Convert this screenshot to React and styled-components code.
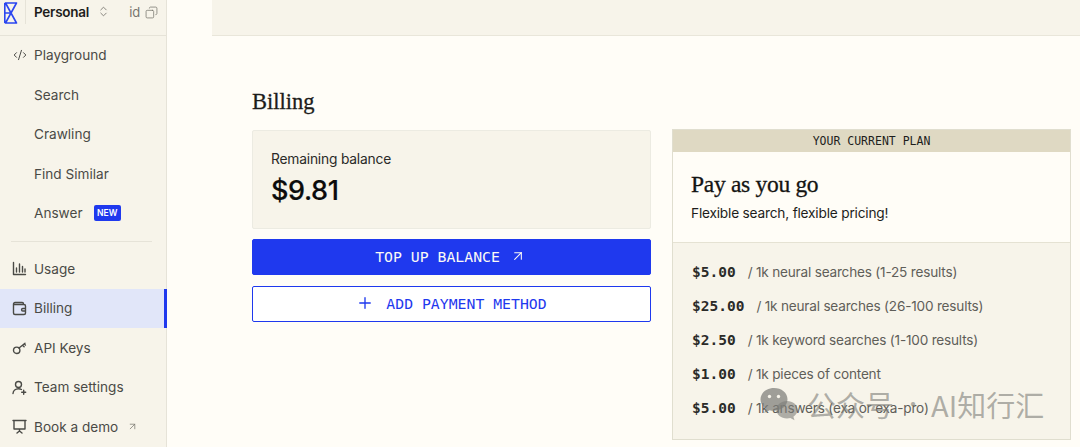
import styled, { createGlobalStyle } from 'styled-components';
import { ChevronsUpDown, Copy, CodeXml, ArrowUpRight, Plus } from 'lucide-react';

const GlobalStyle = createGlobalStyle`
  html, body {
    margin: 0;
    padding: 0;
    height: 447px;
    overflow: hidden;
    background: #fffdf7;
  }
  * { box-sizing: border-box; }
`;

const SANS = `Inter, "Liberation Sans", sans-serif`;
const SERIF = `"Liberation Serif", serif`;
const MONO = `"DejaVu Sans Mono", monospace`;

const Page = styled.div`
  position: relative;
  display: flex;
  width: 1080px;
  height: 447px;
  overflow: hidden;
  background: #fffdf7;
  font-family: ${SANS};
`;

const Sidebar = styled.aside`
  flex: 0 0 167px;
  height: 447px;
  background: #f7f4ea;
  border-right: 1px solid #e6e3d8;
`;

const Brand = styled.div`
  display: flex;
  align-items: center;
  height: 35.5px;
  padding: 0 0 11px 4px;
  border-bottom: 1px solid #e6e3d8;
`;

const Logo = styled.svg`
  width: 14px;
  height: 22px;
  margin-top: 2px;
  flex: none;
`;

const BrandRule = styled.span`
  width: 1px;
  height: 24px;
  margin: 0 8px 0 7px;
  background: #e6e3d8;
`;

const Workspace = styled.span`
  font-size: 13.5px;
  font-weight: 600;
  letter-spacing: -0.25px;
  color: #1d1d1b;
`;

const Chevrons = styled(ChevronsUpDown)`
  margin-left: 8px;
  color: #77756e;
`;

const IdLabel = styled.span`
  margin: 0 5px 0 19px;
  font-size: 13px;
  color: #77756e;
`;

const CopyIcon = styled(Copy)`
  margin-top: 1px;
  color: #77756e;
  transform: scaleX(-1);
`;

const NavRow = styled.div`
  display: flex;
  align-items: center;
  height: 39.5px;
  padding-left: 12px;
  font-size: 13.6px;
  color: #4a4a46;
  background: ${p => (p.$active ? '#e1e6f9' : 'transparent')};
  border-right: ${p => (p.$active ? '3px solid #1f39ee' : '0')};
  margin-right: ${p => (p.$active ? '-1px' : '0')};
`;

const NavIcon = styled.span`
  display: flex;
  align-items: center;
  justify-content: center;
  flex: 0 0 22px;
  width: 22px;
  height: 16px;
  padding-right: 7px;
  color: #4a4a46;
`;

const IconSvg = styled.svg`
  width: 15px;
  height: 15px;
  flex: none;
  fill: none;
  stroke: currentColor;
  stroke-width: 1.4;
  stroke-linecap: round;
  stroke-linejoin: round;
`;

const NewBadge = styled.span`
  margin-left: 11px;
  padding: 0 3.5px;
  height: 16px;
  line-height: 16px;
  border-radius: 2px;
  background: #1f39ee;
  color: #fff;
  font-size: 8.5px;
  font-weight: 600;
  letter-spacing: 0.1px;
`;

const DemoArrow = styled(ArrowUpRight)`
  margin-left: 9px;
  color: #77756e;
`;

const Divider = styled.div`
  height: 1px;
  margin: 7.5px 14px 7.5px 11px;
  background: #e6e3d8;
`;

const Main = styled.main`
  flex: 1;
  min-width: 0;
`;

const TopBand = styled.div`
  height: 36px;
  margin-left: 45px;
  background: #f7f4ea;
  border-bottom: 1px solid #e9e6da;
`;

const Content = styled.div`
  padding: 51px 9px 0 85px;
`;

const Title = styled.h1`
  margin: 0;
  height: 43px;
  line-height: 29px;
  font-family: ${SERIF};
  font-size: 22.5px;
  font-weight: 400;
  color: #1c1c1a;
  -webkit-text-stroke: 0.3px #1c1c1a;
`;

const Columns = styled.div`
  display: grid;
  grid-template-columns: 399px 399px;
  column-gap: 21px;
  align-items: start;
`;

const LeftColumn = styled.div`
  display: flex;
  flex-direction: column;
`;

const BalanceCard = styled.div`
  height: 99px;
  padding: 19px 18px;
  background: #f7f4ea;
  border: 1px solid #ecebe2;
  border-radius: 2px;
`;

const BalanceLabel = styled.div`
  font-size: 13.8px;
  line-height: 18px;
  letter-spacing: -0.2px;
  color: #2a2a28;
`;

const BalanceValue = styled.div`
  margin-top: 7px;
  font-size: 27px;
  line-height: 32px;
  font-weight: 500;
  letter-spacing: -0.4px;
  color: #0c0c0c;
  -webkit-text-stroke: 0.2px #0c0c0c;
`;

const ActionButton = styled.button`
  display: flex;
  align-items: center;
  justify-content: center;
  width: 399px;
  height: 36px;
  margin-top: ${p => (p.$primary ? '10px' : '11px')};
  padding: 0 ${p => (p.$primary ? '2px' : '0')} 2px 0;
  font-family: ${MONO};
  font-size: 14.8px;
  white-space: pre;
  border-radius: 2px;
  color: ${p => (p.$primary ? '#fbfaf5' : '#1f39ee')};
  background: ${p => (p.$primary ? '#1f39ee' : '#ffffff')};
  border: 1px solid #1f39ee;
`;

const TopUpArrow = styled(ArrowUpRight)`
  margin-left: 10px;
`;

const PlusIcon = styled(Plus)`
  margin-right: 12px;
`;

const PlanCard = styled.section`
  height: 311px;
  margin-top: -1px;
  border: 1px solid #e0decf;
`;

const PlanBanner = styled.div`
  height: 22px;
  line-height: 22px;
  text-align: center;
  font-family: ${MONO};
  font-size: 11.5px;
  color: #1d1d1b;
  background: #dfd9c3;
`;

const PlanIntro = styled.div`
  height: 91px;
  padding: 19px 18px 0;
  border-bottom: 1px solid #e5e2d3;
`;

const PlanName = styled.h2`
  margin: 0;
  font-family: ${SERIF};
  font-size: 23.5px;
  line-height: 26px;
  font-weight: 400;
  letter-spacing: -0.3px;
  color: #141412;
  -webkit-text-stroke: 0.3px #141412;
`;

const PlanBlurb = styled.p`
  margin: 7px 0 0;
  font-size: 13.7px;
  line-height: 18px;
  letter-spacing: -0.2px;
  color: #1d1d1b;
`;

const PriceList = styled.div`
  height: 196px;
  padding-top: 12px;
  background: #f7f4ea;
`;

const PriceRow = styled.div`
  display: flex;
  align-items: center;
  height: 34px;
  padding-left: 19px;
`;

const Price = styled.span`
  font-family: ${MONO};
  font-size: 14.5px;
  font-weight: 700;
  color: #2b2b29;
  margin-right: 12px;
`;

const PriceNote = styled.span`
  font-size: 13.6px;
  letter-spacing: -0.2px;
  color: #5f5e59;
`;

const Watermark = styled.div`
  position: absolute;
  left: 760px;
  top: 386px;
  display: flex;
  align-items: center;
  font-family: "Noto Sans CJK SC", sans-serif;
  font-size: 29px;
  line-height: 36px;
  color: rgba(125, 125, 120, 0.6);
  white-space: pre;
  pointer-events: none;
`;

const WatermarkIcon = styled.svg`
  width: 38px;
  height: 34px;
  margin-right: 9px;
  flex: none;
`;

const WatermarkDot = styled.span`
  margin: 0 8px 0 9px;
  font-size: 20px;
`;

const WeChatMark = () => (
  <WatermarkIcon viewBox="0 0 38 34">
    <path d="M14 1C6.500 1 .5 6 .5 12.300c0 3.700 2 6.800 5.200 8.900L4.300 26l5.300-2.800c1.400.4 2.900.6 4.400.6 7.500 0 13.500-5 13.500-11.500S21.500 1 14 1Z" fill="rgba(125,125,120,.72)" />
    <path d="M27 14c-5.800 0-10.500 3.900-10.500 8.800s4.700 8.800 10.500 8.800c1.200 0 2.300-.2 3.400-.5l4.100 2.200-1.100-3.600c2.500-1.600 4.100-4.100 4.100-6.900C37.500 17.900 32.800 14 27 14Z" fill="rgba(125,125,120,.6)" />
    <circle cx="9.500" cy="9.500" r="1.700" fill="#f7f4ea" />
    <circle cx="18.500" cy="9.500" r="1.700" fill="#f7f4ea" />
  </WatermarkIcon>
);

const UsageIcon = () => (
  <IconSvg viewBox="0 0 15 15">
    <path d="M1.500 1.500v12h12M4.500 11V7M7.500 11V3M10.500 11V5.500M13 11V8" />
  </IconSvg>
);

const WalletIcon = () => (
  <IconSvg viewBox="0 0 15 15">
    <path d="M11.500 3.500V2.800a1.300 1.300 0 0 0-1.300-1.300H3A1.500 1.500 0 0 0 1.500 3v9A1.500 1.500 0 0 0 3 13.500h9a1.500 1.500 0 0 0 1.500-1.500V5A1.500 1.500 0 0 0 12 3.500H2M13.500 7.500h-2.700a1.200 1.200 0 0 0 0 2.500h2.700" />
  </IconSvg>
);

const KeyIcon = () => (
  <IconSvg viewBox="0 0 15 15">
    <circle cx="4.700" cy="10.300" r="3.200" />
    <path d="M7 8l6-4.800M10.500 5.200l1.600 1.600M12.300 3.800l1.100 1.300" />
  </IconSvg>
);

const TeamIcon = () => (
  <IconSvg viewBox="0 0 15 15">
    <circle cx="6.500" cy="4.500" r="3" />
    <path d="M1 13.500c.2-2.800 2.500-4.800 5.500-4.800 1.200 0 2.200.3 3 .8M11.700 10.300v4M9.700 12.300h4" />
  </IconSvg>
);

const DemoIcon = () => (
  <IconSvg viewBox="0 0 15 15">
    <path d="M1 1.500h13M2 1.500v8.500h11V1.500M7.500 10v2M5 14l2.500-2 2.500 2" />
  </IconSvg>
);

const navTop = [
  { label: 'Playground', icon: <CodeXml size={14} strokeWidth={1.7} /> },
  { label: 'Search' },
  { label: 'Crawling' },
  { label: 'Find Similar' },
  { label: 'Answer', badge: true },
];

const navBottom = [
  { label: 'Usage', icon: <UsageIcon /> },
  { label: 'Billing', icon: <WalletIcon />, active: true },
  { label: 'API Keys', icon: <KeyIcon /> },
  { label: 'Team settings', icon: <TeamIcon /> },
  { label: 'Book a demo', icon: <DemoIcon />, external: true },
];

const prices = [
  ['$5.00', '/ 1k neural searches (1-25 results)'],
  ['$25.00', '/ 1k neural searches (26-100 results)'],
  ['$2.50', '/ 1k keyword searches (1-100 results)'],
  ['$1.00', '/ 1k pieces of content'],
  ['$5.00', '/ 1k answers (exa or exa-pro)'],
];

const NavItem = ({ label, icon, badge, active, external }) => (
  <NavRow $active={active}>
    <NavIcon>{icon}</NavIcon>
    {label}
    {badge && <NewBadge>NEW</NewBadge>}
    {external && <DemoArrow size={11} strokeWidth={1.6} />}
  </NavRow>
);

export default function App() {
  return (
    <Page>
      <GlobalStyle />
      <Sidebar>
        <Brand>
          <Logo viewBox="0 0 14 22">
            <path d="M.8 1h12.400M.8 21h12.400M.8 1v20M1.500 1l11 20M12.500 1l-11 20M1 11h5" fill="none" stroke="#2b46f0" strokeWidth="1.600" />
          </Logo>
          <BrandRule />
          <Workspace>Personal</Workspace>
          <Chevrons size={13} strokeWidth={1.6} />
          <IdLabel>id</IdLabel>
          <CopyIcon size={13} strokeWidth={1.4} />
        </Brand>
        {navTop.map(item => (
          <NavItem key={item.label} {...item} />
        ))}
        <Divider />
        {navBottom.map(item => (
          <NavItem key={item.label} {...item} />
        ))}
      </Sidebar>
      <Main>
        <TopBand />
        <Content>
          <Title>Billing</Title>
          <Columns>
            <LeftColumn>
              <BalanceCard>
                <BalanceLabel>Remaining balance</BalanceLabel>
                <BalanceValue>$9.81</BalanceValue>
              </BalanceCard>
              <ActionButton $primary>
                TOP UP BALANCE
                <TopUpArrow size={16} strokeWidth={1.6} />
              </ActionButton>
              <ActionButton>
                <PlusIcon size={18} strokeWidth={1.8} />
                ADD PAYMENT METHOD
              </ActionButton>
            </LeftColumn>
            <PlanCard>
              <PlanBanner>YOUR CURRENT PLAN</PlanBanner>
              <PlanIntro>
                <PlanName>Pay as you go</PlanName>
                <PlanBlurb>Flexible search, flexible pricing!</PlanBlurb>
              </PlanIntro>
              <PriceList>
                {prices.map(([price, note], i) => (
                  <PriceRow key={i}>
                    <Price>{price}</Price>
                    <PriceNote>{note}</PriceNote>
                  </PriceRow>
                ))}
              </PriceList>
            </PlanCard>
          </Columns>
        </Content>
      </Main>
      <Watermark>
        <WeChatMark />
        公众号
        <WatermarkDot>·</WatermarkDot>
        AI知行汇
      </Watermark>
    </Page>
  );
}
